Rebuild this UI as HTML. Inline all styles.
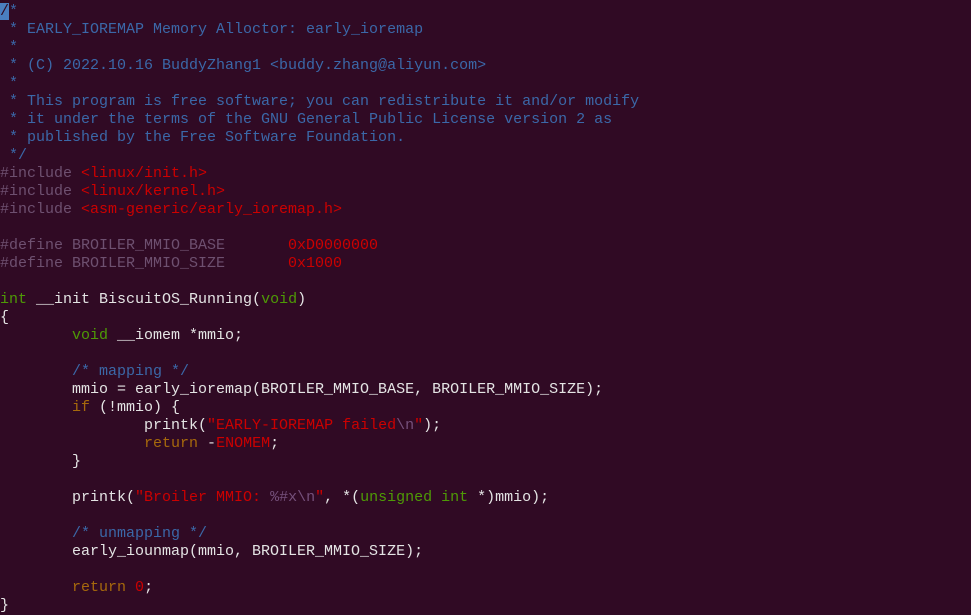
<!DOCTYPE html><html><head><style>
body{margin:0;background:#300a24;width:971px;height:614px;overflow:hidden}
pre{margin:0;position:absolute;top:3px;left:0;font-family:"Liberation Mono",monospace;font-size:15px;line-height:18px;color:#e4e4e4;letter-spacing:0}
.c{color:#3b68a8}.r{color:#cc0000}.p{color:#6e5070}.g{color:#4e9a06}.y{color:#a6690c}.s{color:#75507b}
.cur{background:#4a7fc0;color:#300a24}
</style></head><body><pre><span class="c"><span class="cur">/</span>*
 * EARLY_IOREMAP Memory Alloctor: early_ioremap
 *
 * (C) 2022.10.16 BuddyZhang1 &lt;buddy.zhang@aliyun.com&gt;
 *
 * This program is free software; you can redistribute it and/or modify
 * it under the terms of the GNU General Public License version 2 as
 * published by the Free Software Foundation.
 */</span>
<span class="p">#include </span><span class="r">&lt;linux/init.h&gt;</span>
<span class="p">#include </span><span class="r">&lt;linux/kernel.h&gt;</span>
<span class="p">#include </span><span class="r">&lt;asm-generic/early_ioremap.h&gt;</span>

<span class="p">#define BROILER_MMIO_BASE       </span><span class="r">0xD0000000</span>
<span class="p">#define BROILER_MMIO_SIZE       </span><span class="r">0x1000</span>

<span class="g">int</span> __init BiscuitOS_Running(<span class="g">void</span>)
{
        <span class="g">void</span> __iomem *mmio;

        <span class="c">/* mapping */</span>
        mmio = early_ioremap(BROILER_MMIO_BASE, BROILER_MMIO_SIZE);
        <span class="y">if</span> (!mmio) {
                printk(<span class="r">"EARLY-IOREMAP failed</span><span class="s">\n</span><span class="r">"</span>);
                <span class="y">return</span> -<span class="r">ENOMEM</span>;
        }

        printk(<span class="r">"Broiler MMIO: </span><span class="s">%#x\n</span><span class="r">"</span>, *(<span class="g">unsigned int</span> *)mmio);

        <span class="c">/* unmapping */</span>
        early_iounmap(mmio, BROILER_MMIO_SIZE);

        <span class="y">return</span> <span class="r">0</span>;
}</pre></body></html>
